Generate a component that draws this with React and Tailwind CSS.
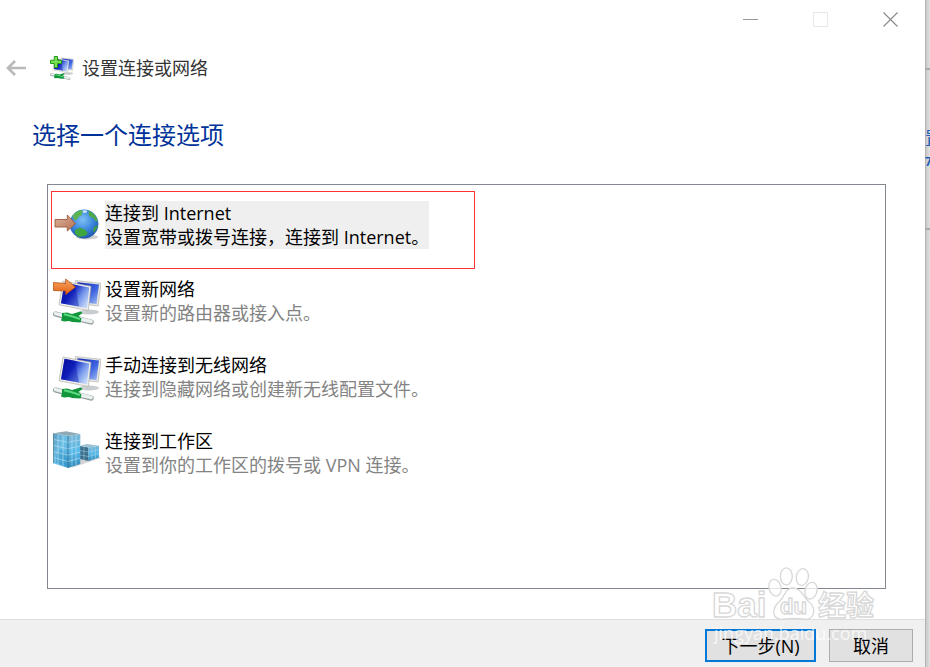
import { useState } from "react"

function MonitorsArt() {
  return (
    <>
      <ellipse cx="36" cy="35" rx="10" ry="2.5" fill="#c9cdd0" />
      <path d="M22.5 3.5 48 6.3 45.2 29 20 26Z" fill="#e6e6e2" stroke="#a9a9a5" strokeWidth=".6" />
      <path d="M24.5 5.2 46 7.6 43.5 27 22 24.5Z" fill="url(#screenBack)" />
      <path d="M10 4 38 9.3 35.3 33.5 6 27.8Z" fill="#efefeb" stroke="#a3a3a0" strokeWidth=".6" />
      <path d="M11.5 5.8 36.3 10.4 34 31.2 8 26.2Z" fill="url(#screenFront)" />
      <path d="M11.5 5.8 22 7.8 26 29.6 8 26.2Z" fill="#0b12a8" opacity=".4" />
      <path d="M22 39c3-4 6-5 11-4" fill="none" stroke="#cfd3d2" strokeWidth="2" />
      <path d="M2.500 37 12 39.5" stroke="#8f9b9a" strokeWidth="5" strokeLinecap="round" />
      <path d="M2.500 36.6 12 39" stroke="#e9f0ef" strokeWidth="3.4" strokeLinecap="round" />
      <path d="M26 42 38 45" stroke="#8f9b9a" strokeWidth="5.400" strokeLinecap="round" />
      <path d="M26 41.600 38 44.5" stroke="#e9f0ef" strokeWidth="3.8" strokeLinecap="round" />
      <path d="M9 36 14 35.500l5 1.500 5-1.500 4-1 1.500 1.500-4 3 3 2.500-1 4-8.500-.5-3-1-5 .5-3-1 1-3.500Z" fill="#12963c" />
      <path d="M11 37.3 18 39 27 42" fill="none" stroke="#5bd97f" strokeWidth="2" />
    </>
  )
}

// Gradientes compartilhados pelos ícones.
function IconDefs() {
  return (
    <svg className="absolute h-0 w-0" aria-hidden="true">
      <defs>
        <linearGradient id="screenFront" x1="0" y1=".1" x2="1" y2=".7">
          <stop offset="0" stopColor="#060a96" />
          <stop offset=".4" stopColor="#1226c4" />
          <stop offset=".7" stopColor="#6f92ea" />
          <stop offset="1" stopColor="#c3d6f8" />
        </linearGradient>
        <linearGradient id="screenBack" x1="0" y1="0" x2="1" y2="1">
          <stop offset="0" stopColor="#0d1cb0" />
          <stop offset=".6" stopColor="#3f66e0" />
          <stop offset="1" stopColor="#a8c2f4" />
        </linearGradient>
        <radialGradient id="ocean" cx=".45" cy=".35" r=".7">
          <stop offset="0" stopColor="#7fc0f5" />
          <stop offset=".55" stopColor="#3a86dc" />
          <stop offset="1" stopColor="#1c50a4" />
        </radialGradient>
        <linearGradient id="copper" x1="0" y1="0" x2="1" y2="1">
          <stop offset="0" stopColor="#dcb3a0" />
          <stop offset="1" stopColor="#b4714f" />
        </linearGradient>
        <linearGradient id="orange" x1="0" y1="0" x2="0" y2="1">
          <stop offset="0" stopColor="#f9a868" />
          <stop offset="1" stopColor="#e2600f" />
        </linearGradient>
        <linearGradient id="glassLeft" x1="0" y1="0" x2="1" y2="1">
          <stop offset="0" stopColor="#5d9dbd" />
          <stop offset=".5" stopColor="#6cc0e8" />
          <stop offset="1" stopColor="#3e9fd4" />
        </linearGradient>
        <linearGradient id="glassRight" x1="0" y1="0" x2="0" y2="1">
          <stop offset="0" stopColor="#7cb6d2" />
          <stop offset=".5" stopColor="#58b9ea" />
          <stop offset="1" stopColor="#2d87b8" />
        </linearGradient>
      </defs>
    </svg>
  )
}

function GlobeIcon() {
  return (
    <svg viewBox="0 0 48 48" className="h-12 w-12 shrink-0" aria-hidden="true">
      <ellipse cx="34" cy="36" rx="11" ry="2.5" fill="#cfcfcf" />
      <circle cx="31" cy="23" r="14.400" fill="url(#ocean)" />
      <path d="M19.500 15c2-3.500 5-5.500 8.500-6l2 1.500-1.500 2 .5 1.500-3 1.500-2 3-2 .5-1.500-1.500Z" fill="#5db552" />
      <path d="M35 9.500c4 1.200 7 4 8.600 7.500l1 4-2.600-1.500-2-3-2.500-.5-2-2.500.5-2Z" fill="#4ea846" />
      <path d="M22 29l4.500-2.200 5 1.500 3 3.200-1 2.500-4 1.500-4 .3-3.500-3Z" fill="#3fa53f" />
      <path d="M41 26l3.500-2c-.3 3-1.500 5.500-3.500 7.500l-1-2Z" fill="#3f9a4c" />
      <path d="M29.500 9.500l4-.3.500 2-3.500.8Z" fill="#d5edfb" />
      <path d="M2 18.500H14.300V14L22.500 22.500 14.300 30V26H2Z" fill="url(#copper)" stroke="#9c5a40" strokeWidth=".9" />
    </svg>
  )
}

function NewNetworkIcon() {
  return (
    <svg viewBox="0 0 48 48" className="h-12 w-12 shrink-0" aria-hidden="true">
      <MonitorsArt />
      <path d="M.5 5.500 12.700 6.500V2L22.500 10 12.700 17.500V14L.5 13.500Z" fill="url(#orange)" stroke="#bd500e" strokeWidth=".8" />
    </svg>
  )
}

function WirelessIcon() {
  return (
    <svg viewBox="0 0 48 48" className="h-12 w-12 shrink-0" aria-hidden="true">
      <MonitorsArt />
    </svg>
  )
}

function WorkplaceIcon() {
  return (
    <svg viewBox="0 0 48 48" className="h-12 w-12 shrink-0" aria-hidden="true">
      <path d="M18 39 48 29 45 27 27 30Z" fill="#d4d4d4" />
      <path d="M27 17 35.500 18.500V32L27 30Z" fill="#3d6f8a" />
      <path d="M35.500 18.500 46 16.700V28.500L35.500 32Z" fill="url(#glassRight)" />
      <path d="M27 16.700 34 15 46 16.700 35.500 18.500Z" fill="#9cc3d5" />
      <path d="M27 21.500 35.500 23 46 20.700M27 26 35.500 27.500 46 24.700M39 18V31M42.500 17.500V29.800M31 17.500V31" fill="none" stroke="#a5d6ec" strokeWidth=".5" />
      <path d="M.3 4.300 15 6.700V39L.3 34.300Z" fill="url(#glassLeft)" />
      <path d="M15 6.700 27.300 5V35L15 39Z" fill="url(#glassRight)" />
      <path d="M.3 4.300 13 2.300 27.300 5 15 6.700Z" fill="#8fa9b5" />
      <path d="M3 28 6 22l3-2 3 5 3 6V38L3 34Z" fill="#2386bd" opacity=".4" />
      <path d="M.3 10.500 15 13.200 27.300 11M.3 16.500 15 19.700 27.300 17M.3 22.500 15 26.200 27.300 23M.3 28.500 15 32.500 27.300 29M5 5V36M10 6V37.500M19 6.200V37.500M23 5.700V36.200" fill="none" stroke="#bfe6f7" strokeWidth=".6" />
      <path d="M.3 34.300V4.300M15 6.700V39" fill="none" stroke="#37718e" strokeWidth=".8" />
    </svg>
  )
}

function WizardIcon() {
  return (
    <svg viewBox="0 0 48 48" className="h-6 w-6" aria-hidden="true">
      <MonitorsArt />
      <path d="M8.500 1H15V8.500H23V15H15V23H8.500V15H1V8.500H8.500Z" fill="#7be04f" stroke="#209a1e" strokeWidth="2" />
    </svg>
  )
}

function Watermark() {
  return (
    <svg
      viewBox="0 0 170 80"
      className="pointer-events-none absolute right-[46px] bottom-[21px] h-20 w-[170px]"
      fill="#ffffff"
      fillOpacity=".75"
      stroke="#d8d8d8"
      strokeWidth="1.3"
      aria-hidden="true"
    >
      <text x="3" y="51" fontSize="35" fontWeight="700" fontFamily="Liberation Sans">Bai</text>
      <ellipse cx="66" cy="21.700" rx="6" ry="8.500" transform="rotate(-15 66 21.700)" />
      <ellipse cx="77.300" cy="10.300" rx="6" ry="8.500" />
      <ellipse cx="93.300" cy="11" rx="6" ry="8.500" transform="rotate(10 93.300 11)" />
      <ellipse cx="102" cy="24.700" rx="6" ry="8.500" transform="rotate(15 102 24.700)" />
      <path d="M84 22c8 0 10 8 15 13 5 4 7 9 5 14-2 4-6 5-11 4-6-1-11-1-17 0-6 1-10-1-11-5-1-5 1-9 6-13 5-5 5-13 13-13Z" />
      <text x="71" y="48" fontSize="22" fontWeight="700" fontFamily="Liberation Sans">du</text>
      <text x="109" y="50" fontSize="28" fontWeight="700" fontFamily="Noto Sans CJK SC">经验</text>
      <text x="5" y="74" fontSize="18" stroke="none" fontFamily="Open Sans">jingyan.baidu.com</text>
    </svg>
  )
}

const OPTIONS = [
  { id: "internet", icon: GlobeIcon, title: "连接到 Internet", text: "设置宽带或拨号连接，连接到 Internet。" },
  { id: "network", icon: NewNetworkIcon, title: "设置新网络", text: "设置新的路由器或接入点。" },
  { id: "wireless", icon: WirelessIcon, title: "手动连接到无线网络", text: "连接到隐藏网络或创建新无线配置文件。" },
  { id: "workplace", icon: WorkplaceIcon, title: "连接到工作区", text: "设置到你的工作区的拨号或 VPN 连接。" },
]

export default function App() {
  const [selected, setSelected] = useState("internet")

  return (
    <div className="flex min-h-screen bg-white font-['Open_Sans','Noto_Sans_CJK_SC',sans-serif] text-lg leading-6 text-black">
      <IconDefs />
      <main className="relative flex min-w-0 flex-1 flex-col">
        {/* Barra de título */}
        <div className="flex h-[39px] justify-end">
          <button className="flex w-[70px] items-center justify-center" aria-label="最小化">
            <span className="h-px w-[15px] bg-[#999999]" />
          </button>
          <button className="flex w-[70px] items-center justify-center" aria-label="最大化" disabled>
            <span className="h-[15px] w-[15px] border border-[#e8e8e8]" />
          </button>
          <button className="flex w-[70px] items-center justify-center" aria-label="关闭">
            <svg viewBox="0 0 15 15" className="h-[15px] w-[15px]" stroke="#888888" strokeWidth="1.1">
              <path d="M.5.500 14.500 14.500M14.500.500.500 14.500" />
            </svg>
          </button>
        </div>

        <header className="flex h-[58px] items-center pl-1.5">
          <button aria-label="返回">
            <svg viewBox="0 0 20 16" className="h-4 w-5" fill="none" stroke="#b9b9b9" strokeWidth="2.600">
              <path d="M9 1 2 8l7 7M2 8h18" />
            </svg>
          </button>
          <div className="flex items-center gap-2 pl-6 text-[#333333]">
            <WizardIcon />
            <span>设置连接或网络</span>
          </div>
        </header>

        <h1 className="mt-[22px] pl-8 text-2xl leading-8 text-[#003399]">选择一个连接选项</h1>

        <ul className="mt-[33px] mr-[39px] mb-[30px] ml-[47px] flex flex-1 flex-col gap-7 border border-[#828790] py-4 pl-[5px]">
          {OPTIONS.map(({ id, icon: Icon, title, text }) => (
            <li key={id} className="relative">
              <button
                onClick={() => setSelected(id)}
                aria-pressed={selected === id}
                className="flex gap-1 text-left"
              >
                <Icon />
                <span className={selected === id ? "block bg-[#efefef]" : "block"}>
                  <span className="block">{title}</span>
                  <span className={selected === id ? "block" : "block text-[#838383]"}>{text}</span>
                </span>
              </button>
              {id === "internet" ? (
                <span className="pointer-events-none absolute -top-2.5 -left-0.5 h-[78px] w-[424px] border border-[#ff3333]" />
              ) : null}
            </li>
          ))}
        </ul>

        <footer className="flex h-12 items-start justify-end gap-[13px] border-t border-[#dfdfdf] bg-[#f0f0f0] pt-[9px] pr-3">
          <button className="h-[33px] w-[111px] border-2 border-[#0078d7] bg-[#e1e1e1]">下一步(N)</button>
          <button className="h-[33px] w-[84px] border border-[#adadad] bg-[#e1e1e1]">取消</button>
        </footer>
        <Watermark />
      </main>

      {/* Borda da janela que fica atrás */}
      <aside className="flex w-[5px] flex-col overflow-hidden bg-linear-to-r from-[#a8a8a8] via-[#cccccc] via-30% to-[#e0e0e0] text-[#1a5fb4]" aria-hidden="true">
        <span className="mt-[68px] h-0.5 shrink-0 bg-[#aaaaaa]" />
        <span className="mt-14 h-6">置</span>
        <span className="h-6 text-xs leading-6 font-bold">7</span>
        <span className="mt-[54px] h-0.5 shrink-0 bg-[#aaaaaa]" />
      </aside>
    </div>
  )
}
